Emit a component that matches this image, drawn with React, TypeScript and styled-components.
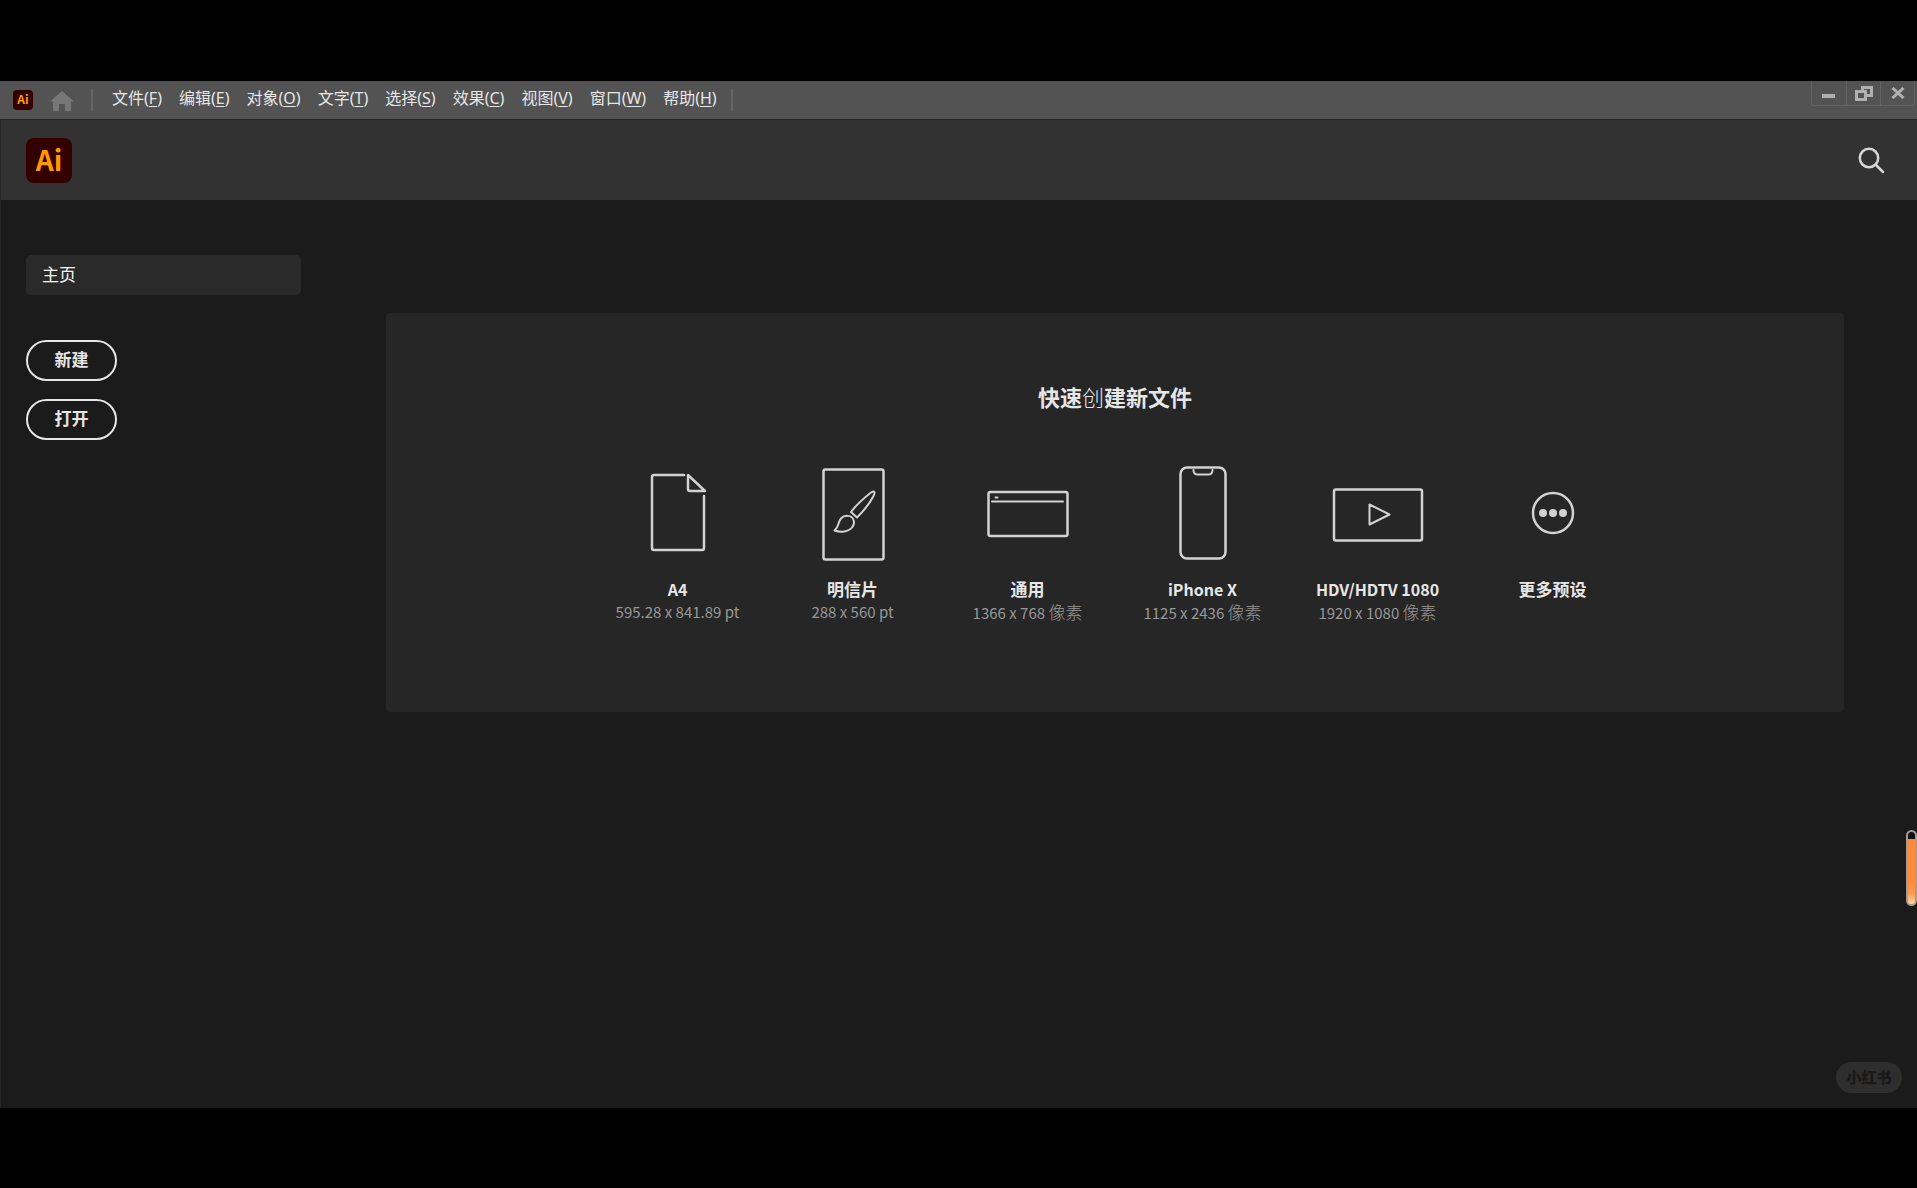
import React from "react";
import styled, { createGlobalStyle } from "styled-components";

const GlobalStyle = createGlobalStyle`
  * { box-sizing: border-box; }
  body {
    margin: 0;
    background: #000000;
    color: #e6e6e6;
    font-family: "Noto Sans CJK SC", "Noto Sans", sans-serif;
    font-size: 17px;
  }
  button { font: inherit; color: inherit; padding: 0; border: 0; background: none; cursor: pointer; }
`;

const Screen = styled.div`
  display: flex;
  flex-direction: column;
  min-height: 100vh;
  padding: 81px 0 80px;
`;

const AppWindow = styled.div`
  position: relative;
  flex: 1;
  display: flex;
  flex-direction: column;
  overflow: hidden;
  background: #1b1b1b;
`;

const MenuBar = styled.div`
  display: flex;
  align-items: center;
  height: 38px;
  padding-left: 13px;
  background: #535353;
`;

const Logo = styled.div<{ $large?: boolean }>`
  display: flex;
  align-items: center;
  justify-content: center;
  width: ${(p) => (p.$large ? 46 : 20)}px;
  height: ${(p) => (p.$large ? 45 : 20)}px;
  padding-bottom: 2px;
  border-radius: ${(p) => (p.$large ? 8 : 4)}px;
  background: #330000;
  color: #ff9a00;
  font-weight: 700;
  font-size: ${(p) => (p.$large ? 28 : 12)}px;
  line-height: 1;
`;

const HomeButton = styled.button`
  display: flex;
  margin: 0 17px;
  padding-top: 2px;
  color: #777777;
`;

const Divider = styled.span`
  width: 2px;
  height: 22px;
  background: #646464;
`;

const Menu = styled.nav`
  display: flex;
  gap: 17px;
  padding: 0 14px 4px 19px;
`;

const MenuItem = styled.button`
  font-family: "Noto Sans", "Noto Sans CJK SC", sans-serif;
  font-size: 16px;
  line-height: 24px;
  white-space: nowrap;
  u { text-underline-offset: 2px; }
`;

const WindowControls = styled.div`
  display: flex;
  align-self: flex-start;
  margin-left: auto;
  margin-right: 2px;
  border: solid #646464;
  border-width: 0 1px 1px;
  border-radius: 0 0 3px 3px;
`;

const ControlButton = styled.button`
  display: flex;
  align-items: center;
  justify-content: center;
  width: 34px;
  height: 24px;
  color: #b0b0b0;
  & + & { border-left: 1px solid #646464; }
`;

const Header = styled.header`
  display: flex;
  align-items: center;
  justify-content: space-between;
  height: 81px;
  padding: 0 32px 0 25px;
  border-top: 1px solid #262626;
  border-left: 1px solid #262626;
  background: #323232;
`;

const SearchButton = styled.button`
  display: flex;
  color: #d6d6d6;
`;

const Body = styled.div`
  flex: 1;
  display: flex;
  align-items: flex-start;
  gap: 85px;
  padding: 55px 73px 0 25px;
  border-left: 1px solid #262626;
`;

const Sidebar = styled.aside`
  display: flex;
  flex-direction: column;
  align-items: flex-start;
  width: 275px;
`;

const HomeTab = styled.a`
  width: 100%;
  height: 40px;
  margin-bottom: 45px;
  padding-left: 16px;
  border-radius: 5px;
  background: #2a2a2a;
  color: #f2f2f2;
  line-height: 38px;
  text-decoration: none;
`;

const PillButton = styled.button`
  width: 91px;
  height: 41px;
  margin-bottom: 18px;
  padding-bottom: 5px;
  border: 2px solid #e6e6e6;
  border-radius: 21px;
  font-weight: 700;
`;

const Panel = styled.main`
  flex: 1;
  height: 399px;
  margin-top: 58px;
  padding-top: 66px;
  border-radius: 4px;
  background: #262626;
`;

const PanelTitle = styled.h1`
  margin: 0 0 51px;
  font-size: 22px;
  line-height: 34px;
  text-align: center;
`;

const PresetList = styled.div`
  display: flex;
  justify-content: center;
`;

const Preset = styled.button`
  display: flex;
  flex-direction: column;
  align-items: center;
  width: 175px;
`;

const PresetIcon = styled.svg`
  width: 100px;
  height: 100px;
  margin-bottom: 13px;
  fill: none;
  stroke: #d2d2d2;
  stroke-width: 2.5;
  stroke-linejoin: round;
  stroke-linecap: round;
`;

const PresetName = styled.span<{ $latin: boolean }>`
  font-size: ${(p) => (p.$latin ? 16 : 17)}px;
  font-weight: 700;
  line-height: 24px;
  white-space: nowrap;
`;

const PresetSize = styled.span`
  color: #989898;
  font-size: 15px;
  line-height: 22px;
  white-space: nowrap;
`;

const Thin = styled.span`
  font-weight: 300;
`;

const Unit = styled(Thin)`
  font-size: 17px;
`;

const Gauge = styled.div`
  position: absolute;
  right: 0;
  top: 749px;
  width: 11px;
  height: 76px;
  border: 2px solid #a79c92;
  border-radius: 6px;
  background: linear-gradient(#101010 0 7px, #ff8a3c 7px 50px, #ff9c52 62px, #ffd9a8);
`;

const Watermark = styled.div`
  position: absolute;
  right: 15px;
  bottom: 15px;
  width: 66px;
  height: 31px;
  border-radius: 16px;
  background: #2e2e2e;
  color: #191919;
  font-size: 15px;
  font-weight: 900;
  line-height: 30px;
  text-align: center;
`;

const menus = [
  ["文件", "F"],
  ["编辑", "E"],
  ["对象", "O"],
  ["文字", "T"],
  ["选择", "S"],
  ["效果", "C"],
  ["视图", "V"],
  ["窗口", "W"],
  ["帮助", "H"],
];

interface PresetData {
  name: string;
  latin?: boolean;
  size?: string;
  unit?: string;
  icon: React.ReactNode;
}

const presets: PresetData[] = [
  {
    name: "A4",
    latin: true,
    size: "595.28 x 841.89 pt",
    icon: (
      <>
        <path d="M56 11H26a2 2 0 0 0-2 2v71a2 2 0 0 0 2 2h48a2 2 0 0 0 2-2V32" />
        <path d="M60 11v14a2 2 0 0 0 2 2h15z" />
      </>
    ),
  },
  {
    name: "明信片",
    size: "288 x 560 pt",
    icon: (
      <>
        <rect x="20.500" y="5.500" width="60" height="90" rx="2" />
        <path strokeWidth="2" d="M50.500 56C49 51 41.500 50.500 38 54.500 34.500 58.500 36.500 62 31.500 66.500 37.500 68.500 45.500 68 49 63.500 51 61 51.500 58.500 50.500 56z" />
        <path strokeWidth="2" d="M48 48C54 40 61 34 68 28.500 71.500 26.500 72.500 28 70.500 32 66.500 40 60.500 47 54 53.500z" />
      </>
    ),
  },
  {
    name: "通用",
    size: "1366 x 768 ",
    unit: "像素",
    icon: (
      <>
        <rect x="10.500" y="28" width="79" height="44" rx="2" />
        <path strokeWidth="2" d="M14 37.500h71M17.500 33.500h2" />
      </>
    ),
  },
  {
    name: "iPhone X",
    latin: true,
    size: "1125 x 2436 ",
    unit: "像素",
    icon: (
      <>
        <rect x="27.500" y="3.500" width="45" height="91" rx="6.500" />
        <path strokeWidth="2" d="M40.500 6q0 4 3.500 4.500h12q3.500-.5 3.500-4.500" />
      </>
    ),
  },
  {
    name: "HDV/HDTV 1080",
    latin: true,
    size: "1920 x 1080 ",
    unit: "像素",
    icon: (
      <>
        <rect x="6" y="25.500" width="88" height="51" rx="2" />
        <path strokeWidth="2" d="M41.500 40.500v20l20-10z" />
      </>
    ),
  },
  {
    name: "更多预设",
    icon: (
      <>
        <circle cx="50" cy="49" r="20" />
        <g fill="#d2d2d2" stroke="none">
          <circle cx="40" cy="49" r="4" />
          <circle cx="50" cy="49" r="4" />
          <circle cx="60" cy="49" r="4" />
        </g>
      </>
    ),
  },
];

export default function App() {
  return (
    <Screen>
      <GlobalStyle />
      <AppWindow>
        <MenuBar>
          <Logo>Ai</Logo>
          <HomeButton aria-label="Home">
            <svg width="24" height="20" viewBox="0 0 24 20" fill="currentColor">
              <path d="M12 0 24 10.500h-3V20h-6v-7H9v7H3v-9.500H0z" />
            </svg>
          </HomeButton>
          <Divider />
          <Menu>
            {menus.map(([label, key]) => (
              <MenuItem key={key}>
                {label}(<u>{key}</u>)
              </MenuItem>
            ))}
          </Menu>
          <Divider />
          <WindowControls>
            <ControlButton aria-label="Minimize">
              <svg width="14" height="14" viewBox="0 0 14 14" fill="currentColor">
                <path d="M0 8h13v4H0z" />
              </svg>
            </ControlButton>
            <ControlButton aria-label="Restore">
              <svg width="18" height="15" viewBox="0 0 18 15" fill="none" stroke="currentColor" strokeWidth="3">
                <path d="M1.500 5.500h9v8h-9z" />
                <path d="M7.500 5V1.500h9v8H12" />
              </svg>
            </ControlButton>
            <ControlButton aria-label="Close">
              <svg width="14" height="12" viewBox="0 0 14 12" fill="none" stroke="currentColor" strokeWidth="3">
                <path d="M1.500 1 12.500 11M12.500 1 1.500 11" />
              </svg>
            </ControlButton>
          </WindowControls>
        </MenuBar>
        <Header>
          <Logo $large>Ai</Logo>
          <SearchButton aria-label="Search">
            <svg width="27" height="27" viewBox="0 0 27 27" fill="none" stroke="currentColor" strokeWidth="2.500" strokeLinecap="round">
              <circle cx="11" cy="11" r="9.200" />
              <path d="m18 18 7 7" />
            </svg>
          </SearchButton>
        </Header>
        <Body>
          <Sidebar>
            <HomeTab href="#home">主页</HomeTab>
            <PillButton>新建</PillButton>
            <PillButton>打开</PillButton>
          </Sidebar>
          <Panel>
            <PanelTitle>
              快速<Thin>创</Thin>建新文件
            </PanelTitle>
            <PresetList>
              {presets.map((preset) => (
                <Preset key={preset.name}>
                  <PresetIcon viewBox="0 0 100 100" aria-hidden="true">
                    {preset.icon}
                  </PresetIcon>
                  <PresetName $latin={Boolean(preset.latin)}>{preset.name}</PresetName>
                  {preset.size && (
                    <PresetSize>
                      {preset.size}
                      {preset.unit && <Unit>{preset.unit}</Unit>}
                    </PresetSize>
                  )}
                </Preset>
              ))}
            </PresetList>
          </Panel>
        </Body>
        <Gauge />
        <Watermark>小红书</Watermark>
      </AppWindow>
    </Screen>
  );
}
